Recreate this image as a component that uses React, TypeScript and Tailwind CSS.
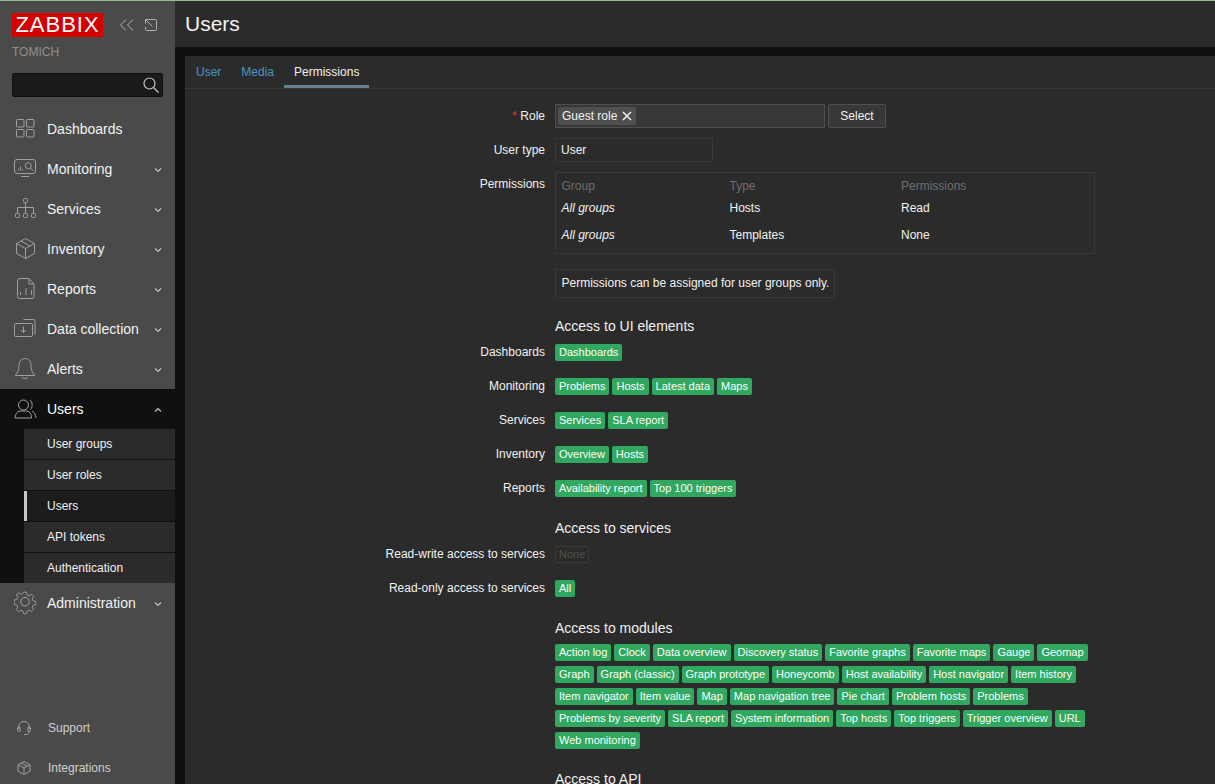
import React from "react";

const S = ({ children }: any) => (
  <svg width="24" height="24" viewBox="0 0 24 24" fill="none" stroke="#a0a0a0" strokeWidth="1">
    {children}
  </svg>
);

const icons: Record<string, React.ReactNode> = {
  Dashboards: (
    <S>
      <rect x="2.500" y="2.500" width="7.500" height="7.500" rx="1" /><rect x="12.500" y="2.500" width="7.500" height="7.500" rx="1" />
      <rect x="2.500" y="12.500" width="7.500" height="7.500" rx="1" /><rect x="12.500" y="12.500" width="7.500" height="7.500" rx="1" />
    </S>
  ),
  Monitoring: (
    <S>
      <rect x="0.500" y="2.500" width="21" height="14" rx="2.500" />
      <path d="M7 19.500h8M4.500 13.500v-2M6.500 13.500v-4M8.500 13.500v-1.500" />
      <circle cx="14.300" cy="8.700" r="3" /><path d="M16.500 11l3 3" />
    </S>
  ),
  Services: (
    <S>
      <rect x="9.500" y="1.500" width="4" height="4" rx="1" />
      <path d="M11.500 5.500v10.500M11.500 10.500H3.500v5.500M11.500 10.500h8v5.500" />
      <rect x="1.500" y="16.500" width="4" height="4" rx="1" /><rect x="9.500" y="16.500" width="4" height="4" rx="1" /><rect x="17.500" y="16.500" width="4" height="4" rx="1" />
    </S>
  ),
  Inventory: (
    <S>
      <path d="M11.500 1.500l9 5v10l-9 5-9-5v-10z" /><path d="M2.500 6.500l9 5 9-5M11.500 11.500v10M7 4l9 5" />
    </S>
  ),
  Reports: (
    <S>
      <path d="M6 1.500h9l5 5.500v12.500a2 2 0 0 1-2 2H5.500a2 2 0 0 1-2-2V4a2.500 2.500 0 0 1 2.500-2.500z" />
      <path d="M15 1.500v5.500h5M6.500 18v-3M12 18v-7M17.500 18v-5" />
    </S>
  ),
  "Data collection": (
    <S>
      <rect x="0.500" y="6.500" width="18" height="13" rx="1" />
      <path d="M9.500 2.500H19.500a1.500 1.500 0 0 1 1.500 1.500v13.500M9.500 9.500v6M7 13l2.500 2.500L12 13" />
    </S>
  ),
  Alerts: (
    <S>
      <path d="M11 1.500c4 0 6 3 6 7 0 5 1.500 7 3.500 9.500v.5h-19V18c2-2.500 3.500-4.500 3.500-9.500 0-4 2-7 6-7z" />
      <path d="M8 20.500c2 1.300 4 1.300 6 0" />
    </S>
  ),
  Users: (
    <S>
      <circle cx="9.500" cy="8" r="5" />
      <path d="M1 21c0-3.500 2-6.500 5-7h7c3 .5 4.500 3.500 4.500 7zM16 3c2.500 1.500 3 7 .5 9.500M18 14c2.500 1.500 3.500 3.500 4 7" />
    </S>
  ),
  Administration: (
    <S>
      <circle cx="11" cy="10.700" r="4.300" />
      <path d="M9.300 .5h3.400l.6 3 2.300 1 2.600-1.700 2.400 2.400-1.700 2.600 1 2.300 3 .6v3.400l-3 .6-1 2.300 1.700 2.600-2.400 2.400-2.600-1.700-2.300 1-.6 3H9.300l-.6-3-2.300-1-2.600 1.700-2.400-2.400 1.700-2.600-1-2.300-3-.6V9.100l3-.6 1-2.300-1.700-2.600 2.400-2.400 2.600 1.700 2.300-1z" transform="translate(1 .7) scale(.91)" />
    </S>
  ),
};

const Chevron = ({ up = false }: { up?: boolean }) => (
  <svg width="8" height="6" viewBox="0 0 8 6" fill="none" stroke="#c4c4c4" strokeWidth="1.200" className="absolute left-[154px] top-[18px]">
    <path d={up ? "M1 4.500 L4 1.500 L7 4.500" : "M1 1.500 L4 4.500 L7 1.500"} />
  </svg>
);

const NavItem = ({ name, active = false, chev = true }: { name: string; active?: boolean; chev?: boolean }) => (
  <div className={`relative flex h-10 items-center pl-[14px] text-[14px] ${active ? "bg-[#0e1012] text-white" : "text-[#f2f2f2]"}`}>
    <span className="flex w-[33px] shrink-0">{icons[name]}</span>
    <span>{name}</span>
    {chev && <Chevron up={active} />}
  </div>
);

const subs = ["User groups", "User roles", "Users", "API tokens", "Authentication"];

const Sidebar = () => (
  <aside className="relative flex h-full w-[175px] shrink-0 flex-col bg-[#4a4a4a]">
    <div className="flex h-[46px] items-start pl-3 pt-[12px]">
      <div className="flex h-[24px] w-[91px] items-center justify-center bg-[#d40000] text-[22px] leading-none tracking-[1px] text-white">ZABBIX</div>
      <svg width="14" height="12" viewBox="0 0 14 12" fill="none" stroke="#b0b0b0" strokeWidth="1" className="ml-[17px] mt-[6px]">
        <path d="M6 .5L.5 6 6 11.500M13 .5L7.500 6l5.500 5.500" />
      </svg>
      <svg width="12" height="12" viewBox="0 0 12 12" fill="none" stroke="#b0b0b0" strokeWidth="1" className="ml-[11px] mt-[6px]">
        <path d="M4 .5h6.500a1 1 0 0 1 1 1v9a1 1 0 0 1-1 1h-9a1 1 0 0 1-1-1V8M.5 .5v4M.5 .5h4M.5 .5l7 7" />
      </svg>
    </div>
    <div className="ml-3 mt-[-2px] h-[20px] text-[12px] leading-[14px] text-[#8f8f8f]">TOMICH</div>
    <div className="mx-3 mt-[8px] flex h-6 w-[151px] items-center justify-end rounded-[2px] border border-[#0e1012] bg-[#1a1a1a] pr-[2px]">
      <svg width="18" height="18" viewBox="0 0 18 18" fill="none" stroke="#c8c8c8" strokeWidth="1.200">
        <circle cx="7.500" cy="7.500" r="5.500" /><path d="M11.500 11.500l5 5" />
      </svg>
    </div>
    <nav className="mt-[12px] flex flex-col">
      {["Dashboards", "Monitoring", "Services", "Inventory", "Reports", "Data collection", "Alerts"].map((n) => (
        <NavItem key={n} name={n} chev={n !== "Dashboards"} />
      ))}
      <NavItem name="Users" active />
      <div className="bg-[#0e1012] pl-6">
        {subs.map((s) => (
          <div
            key={s}
            className={`flex h-[31px] items-center border-b border-[#0e1012] pl-[23px] text-[12px] text-[#f2f2f2] last:h-[30px] last:border-b-0 ${
              s === "Users" ? "relative bg-[#1c1c1c]" : "bg-[#2b2b2b]"
            }`}
          >
            {s === "Users" && <span className="absolute bottom-0 left-0 top-0 w-[3px] bg-[#c8c8c8]" />}
            {s}
          </div>
        ))}
      </div>
      <NavItem name="Administration" />
    </nav>
    <div className="mb-[-4px] mt-auto flex flex-col text-[12px] text-[#d0d0d0]">
      <div className="flex h-10 items-center pl-[17px]">
        <svg width="14" height="14" viewBox="0 0 14 14" fill="none" stroke="#a0a0a0" strokeWidth="1" className="mr-[17px]">
          <path d="M1.500 8V6a5.500 5.500 0 0 1 11 0v2M1.500 6.500h1.500v4H1.500a1 1 0 0 1-1-1V7.500a1 1 0 0 1 1-1zM12.500 6.500H11v4h1.500a1 1 0 0 0 1-1V7.500a1 1 0 0 0-1-1zM12.500 10.500c0 1.500-1.500 3-3 3H7" />
        </svg>
        Support
      </div>
      <div className="flex h-10 items-center pl-[17px]">
        <svg width="14" height="14" viewBox="0 0 14 14" fill="none" stroke="#a0a0a0" strokeWidth="1" className="mr-[17px]">
          <path d="M7 .5l6 3.200v6.600l-6 3.200-6-3.200V3.700zM1 3.700L7 7l6-3.300M7 7v6.500M4.500 2.200L10 5" />
        </svg>
        Integrations
      </div>
    </div>
  </aside>
);

const Tag = ({ children, off = false }: { children: React.ReactNode; off?: boolean }) => (
  <span
    className={`inline-flex h-[17px] items-center whitespace-nowrap rounded-[2px] text-[11px] leading-none ${
      off ? "border border-[#3a3a3a] px-[3px] text-[#4f4f4f]" : "bg-[#30a860] px-[4px] text-white"
    }`}
  >
    {children}
  </span>
);

const Row = ({ label, children, className = "" }: { label: React.ReactNode; children: React.ReactNode; className?: string }) => (
  <div className={`flex items-start ${className}`}>
    <div className="w-[370px] shrink-0 pr-[10px] text-right leading-[14px]">{label}</div>
    <div className="min-w-0 flex-1">{children}</div>
  </div>
);

const Heading = ({ children, className = "" }: { children: React.ReactNode; className?: string }) => (
  <div className={`pl-[370px] text-[14px] leading-[16px] text-[#f2f2f2] ${className}`}>{children}</div>
);

const TagRow = ({ label, tags }: { label: string; tags: string[] }) => (
  <Row label={<span className="relative top-[1px]">{label}</span>} className="h-[34px]">
    <div className="flex gap-[3px]">
      {tags.map((t) => (
        <Tag key={t}>{t}</Tag>
      ))}
    </div>
  </Row>
);

const modules = [
  ["Action log", "Clock", "Data overview", "Discovery status", "Favorite graphs", "Favorite maps", "Gauge", "Geomap"],
  ["Graph", "Graph (classic)", "Graph prototype", "Honeycomb", "Host availability", "Host navigator", "Item history"],
  ["Item navigator", "Item value", "Map", "Map navigation tree", "Pie chart", "Problem hosts", "Problems"],
  ["Problems by severity", "SLA report", "System information", "Top hosts", "Top triggers", "Trigger overview", "URL"],
  ["Web monitoring"],
];

export default function App() {
  return (
    <div className="flex h-[784px] w-[1215px] flex-col overflow-hidden bg-[#0e1012] font-['Liberation_Sans',Arial,sans-serif] text-[12px] text-[#f2f2f2]">
      <div className="h-px shrink-0 bg-[#9db892]" />
      <div className="flex min-h-0 flex-1">
        <Sidebar />
        <main className="flex min-w-0 flex-1 flex-col">
          <header className="mb-[9px] flex h-[46px] shrink-0 items-start bg-[#2b2b2b] pl-[10px] pt-[11px] text-[21px] leading-[24px]">Users</header>
          <section className="ml-[10px] flex-1 overflow-hidden bg-[#2b2b2b]">
            <div className="flex h-[33px] items-stretch border-b border-[#383838] pl-[1px]">
              <div className="flex items-center px-[10px] text-[#4796c4]">User</div>
              <div className="flex items-center px-[10px] text-[#4796c4]">Media</div>
              <div className="flex items-center border-b-[3px] border-[#69808d] px-[10px] pt-[3px]">Permissions</div>
            </div>
            <div className="flex flex-col pt-[15px]">
              <Row label={<span className="relative top-[5px]"><span className="text-[#e33734]">* </span>Role</span>} className="mb-[10px]">
                <div className="flex gap-[3px]">
                  <div className="flex h-6 w-[270px] items-center border border-[#4f4f4f] bg-[#383838] px-[2px]">
                    <span className="flex h-[18px] items-center gap-[5px] rounded-[2px] bg-[#4f4f4f] pl-[4px] pr-[4px]">
                      Guest role
                      <svg width="10" height="10" viewBox="0 0 10 10" stroke="#f2f2f2" strokeWidth="1.500"><path d="M1 1l8 8M9 1l-8 8" /></svg>
                    </span>
                  </div>
                  <div className="flex h-6 w-[58px] items-center justify-center rounded-[2px] border border-[#4f4f4f] bg-[#383838]">Select</div>
                </div>
              </Row>
              <Row label={<span className="relative top-[5px]">User type</span>} className="mb-[10px]">
                <div className="flex h-6 w-[158px] items-center border border-[#383838] px-[5px]">User</div>
              </Row>
              <Row label={<span className="relative top-[5px]">Permissions</span>} className="mb-[15px]">
                <div className="h-[82px] w-[540px] border border-[#383838] px-[5.500px] pt-[6px]">
                  <div className="grid grid-cols-[168px_171.500px_1fr] leading-[14px]">
                    <span className="text-[#6f6f6f]">Group</span><span className="text-[#6f6f6f]">Type</span><span className="text-[#6f6f6f]">Permissions</span>
                  </div>
                  <div className="mt-[8px] grid grid-cols-[168px_171.500px_1fr] leading-[14px]">
                    <span className="italic">All groups</span><span>Hosts</span><span>Read</span>
                  </div>
                  <div className="mt-[13px] grid grid-cols-[168px_171.500px_1fr] leading-[14px]">
                    <span className="italic">All groups</span><span>Templates</span><span>None</span>
                  </div>
                </div>
              </Row>
              <Row label="" className="mb-[20px]">
                <div className="h-[29px] w-[280px] whitespace-nowrap border border-[#383838] px-[5.500px] pt-[6px] leading-[14px]">Permissions can be assigned for user groups only.</div>
              </Row>
              <Heading className="mb-[10px]">Access to UI elements</Heading>
              <TagRow label="Dashboards" tags={["Dashboards"]} />
              <TagRow label="Monitoring" tags={["Problems", "Hosts", "Latest data", "Maps"]} />
              <TagRow label="Services" tags={["Services", "SLA report"]} />
              <TagRow label="Inventory" tags={["Overview", "Hosts"]} />
              <TagRow label="Reports" tags={["Availability report", "Top 100 triggers"]} />
              <Heading className="mb-[10px] mt-[6px]">Access to services</Heading>
              <Row label={<span className="relative top-[1px]">Read-write access to services</span>} className="h-[34px]">
                <div className="flex"><Tag off>None</Tag></div>
              </Row>
              <TagRow label="Read-only access to services" tags={["All"]} />
              <Heading className="mb-[8px] mt-[6px]">Access to modules</Heading>
              <div className="flex flex-col gap-[5px] pl-[370px]">
                {modules.map((r, i) => (
                  <div key={i} className="flex gap-[3px]">
                    {r.map((t) => (
                      <Tag key={t}>{t}</Tag>
                    ))}
                  </div>
                ))}
              </div>
              <Heading className="mt-[22px]">Access to API</Heading>
            </div>
          </section>
        </main>
      </div>
    </div>
  );
}
